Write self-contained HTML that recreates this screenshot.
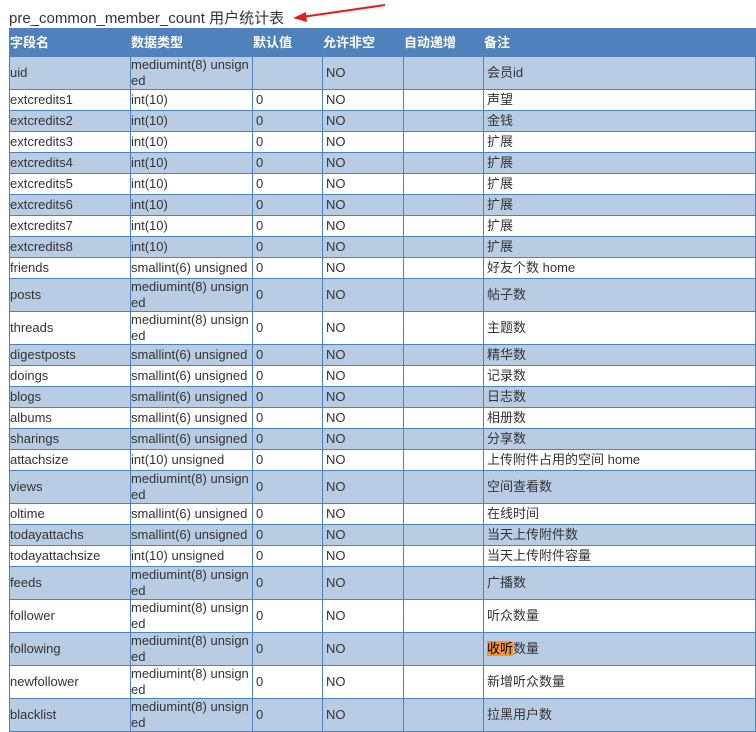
<!DOCTYPE html>
<html><head><meta charset="utf-8"><style>
body{margin:0;background:#fff;font-family:"Liberation Sans","Noto Sans CJK SC",sans-serif;color:#333;}
.t{position:absolute;left:9px;top:7px;font-size:15px;color:#333;}
table{position:absolute;left:9px;top:28px;border-collapse:collapse;table-layout:fixed;width:747px;font-size:13px;}
td,th{border:1px solid #4f81bd;padding:0;line-height:16px;word-break:break-all;text-align:left;vertical-align:middle;overflow:hidden}
td:nth-child(n+3){padding-left:3px}
th{background:#4f81bd;color:#fff;font-weight:bold;border-color:#4f81bd;height:27px;}
tr{height:21px}
tr.d{height:33px}
tbody tr:nth-child(odd) td{background:#b8cce4}
.hl{background:#f79232;color:#000}
</style></head><body>
<div class="t">pre_common_member_count 用户统计表</div>
<svg style="position:absolute;left:292px;top:3px" width="100" height="22"><line x1="93" y1="2" x2="10" y2="14" stroke="#e02020" stroke-width="2"/><polygon points="1,15 14,9 15,19" fill="#e02020"/></svg>
<table>
<colgroup><col style="width:121px"><col style="width:122px"><col style="width:70px"><col style="width:81px"><col style="width:80px"><col></colgroup>
<thead><tr><th>字段名</th><th>数据类型</th><th>默认值</th><th>允许非空</th><th>自动递增</th><th>备注</th></tr></thead>
<tbody>
<tr class="d"><td>uid</td><td>mediumint(8) unsigned</td><td></td><td>NO</td><td></td><td>会员id</td></tr>
<tr><td>extcredits1</td><td>int(10)</td><td>0</td><td>NO</td><td></td><td>声望</td></tr>
<tr><td>extcredits2</td><td>int(10)</td><td>0</td><td>NO</td><td></td><td>金钱</td></tr>
<tr><td>extcredits3</td><td>int(10)</td><td>0</td><td>NO</td><td></td><td>扩展</td></tr>
<tr><td>extcredits4</td><td>int(10)</td><td>0</td><td>NO</td><td></td><td>扩展</td></tr>
<tr><td>extcredits5</td><td>int(10)</td><td>0</td><td>NO</td><td></td><td>扩展</td></tr>
<tr><td>extcredits6</td><td>int(10)</td><td>0</td><td>NO</td><td></td><td>扩展</td></tr>
<tr><td>extcredits7</td><td>int(10)</td><td>0</td><td>NO</td><td></td><td>扩展</td></tr>
<tr><td>extcredits8</td><td>int(10)</td><td>0</td><td>NO</td><td></td><td>扩展</td></tr>
<tr><td>friends</td><td>smallint(6) unsigned</td><td>0</td><td>NO</td><td></td><td>好友个数 home</td></tr>
<tr class="d"><td>posts</td><td>mediumint(8) unsigned</td><td>0</td><td>NO</td><td></td><td>帖子数</td></tr>
<tr class="d"><td>threads</td><td>mediumint(8) unsigned</td><td>0</td><td>NO</td><td></td><td>主题数</td></tr>
<tr><td>digestposts</td><td>smallint(6) unsigned</td><td>0</td><td>NO</td><td></td><td>精华数</td></tr>
<tr><td>doings</td><td>smallint(6) unsigned</td><td>0</td><td>NO</td><td></td><td>记录数</td></tr>
<tr><td>blogs</td><td>smallint(6) unsigned</td><td>0</td><td>NO</td><td></td><td>日志数</td></tr>
<tr><td>albums</td><td>smallint(6) unsigned</td><td>0</td><td>NO</td><td></td><td>相册数</td></tr>
<tr><td>sharings</td><td>smallint(6) unsigned</td><td>0</td><td>NO</td><td></td><td>分享数</td></tr>
<tr><td>attachsize</td><td>int(10) unsigned</td><td>0</td><td>NO</td><td></td><td>上传附件占用的空间 home</td></tr>
<tr class="d"><td>views</td><td>mediumint(8) unsigned</td><td>0</td><td>NO</td><td></td><td>空间查看数</td></tr>
<tr><td>oltime</td><td>smallint(6) unsigned</td><td>0</td><td>NO</td><td></td><td>在线时间</td></tr>
<tr><td>todayattachs</td><td>smallint(6) unsigned</td><td>0</td><td>NO</td><td></td><td>当天上传附件数</td></tr>
<tr><td>todayattachsize</td><td>int(10) unsigned</td><td>0</td><td>NO</td><td></td><td>当天上传附件容量</td></tr>
<tr class="d"><td>feeds</td><td>mediumint(8) unsigned</td><td>0</td><td>NO</td><td></td><td>广播数</td></tr>
<tr class="d"><td>follower</td><td>mediumint(8) unsigned</td><td>0</td><td>NO</td><td></td><td>听众数量</td></tr>
<tr class="d"><td>following</td><td>mediumint(8) unsigned</td><td>0</td><td>NO</td><td></td><td><span class="hl">收听</span>数量</td></tr>
<tr class="d"><td>newfollower</td><td>mediumint(8) unsigned</td><td>0</td><td>NO</td><td></td><td>新增听众数量</td></tr>
<tr class="d"><td>blacklist</td><td>mediumint(8) unsigned</td><td>0</td><td>NO</td><td></td><td>拉黑用户数</td></tr>
</tbody></table>
</body></html>
